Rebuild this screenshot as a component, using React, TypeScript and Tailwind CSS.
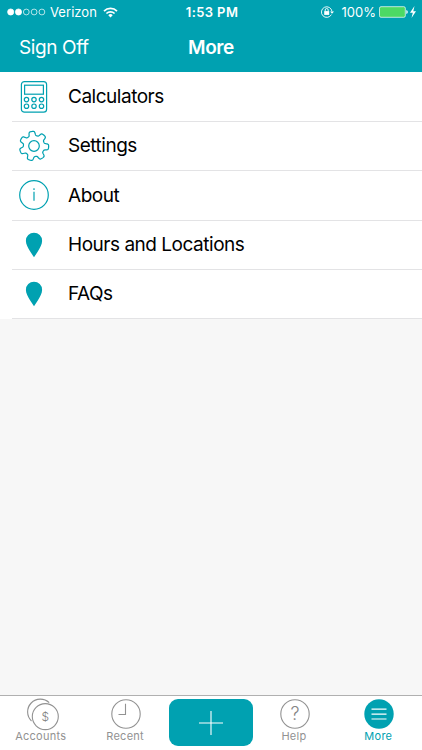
import type { ReactNode } from "react";

const TEAL = "#00a1b1";

const CalculatorIcon = () => (
  <svg width="28" height="34" viewBox="0 0 28 34" fill="none" stroke={TEAL} strokeWidth="1.2">
    <rect x="1.4" y="1.6" width="25.2" height="30.6" rx="3" />
    <rect x="4.6" y="5.2" width="18.8" height="9" />
    {[6.5, 14, 21.5].map((x) => (
      <g key={x}>
        <circle cx={x} cy="19.6" r="2.2" />
        <circle cx={x} cy="26.2" r="2.2" />
      </g>
    ))}
  </svg>
);

// seven rounded teeth, tilted slightly to the left
const gearPath = () => {
  const points: string[] = [];
  for (let i = 0; i < 210; i++) {
    const angle = (i / 210) * Math.PI * 2;
    const wave = Math.tanh(2.4 * (Math.cos(7 * angle + 1.1) + 0.15));
    const r = 12.6 + 2.1 * wave;
    points.push(`${(16 + r * Math.sin(angle)).toFixed(2)} ${(16 - r * Math.cos(angle)).toFixed(2)}`);
  }
  return `M${points.join("L")}Z`;
};

const GearIcon = () => (
  <svg width="32" height="32" viewBox="0 0 32 32" fill="none" stroke={TEAL} strokeWidth="1.2" strokeLinejoin="round">
    <path d={gearPath()} />
    <circle cx="16" cy="16" r="5.3" />
  </svg>
);

const InfoIcon = () => (
  <svg width="32" height="32" viewBox="0 0 32 32" fill="none" stroke={TEAL} strokeWidth="1.2">
    <circle cx="16" cy="16" r="14.3" />
    <path d="M16 12.8V21.8" />
    <path d="M16 9.3V11" />
  </svg>
);

const PinIcon = () => (
  <svg width="18" height="26" viewBox="0 0 18 26" fill={TEAL}>
    <path d="M9 .7a8.1 8.1 0 0 1 8.1 8.2c0 3.2-2 6.8-4.3 10.6L9 25.3l-3.8-5.8C2.9 15.7.9 12.1.9 8.9A8.1 8.1 0 0 1 9 .7Z" />
  </svg>
);

const ROWS: { label: string; icon: ReactNode }[] = [
  { label: "Calculators", icon: <CalculatorIcon /> },
  { label: "Settings", icon: <GearIcon /> },
  { label: "About", icon: <InfoIcon /> },
  { label: "Hours and Locations", icon: <PinIcon /> },
  { label: "FAQs", icon: <PinIcon /> },
];

const AccountsIcon = () => (
  <svg width="34" height="34" viewBox="0 0 34 34" fill="none" stroke="#929292" strokeWidth="1.1">
    <path d="M6.5 23A12.7 12.7 0 1 1 24.2 4.7" />
    <circle cx="20.3" cy="18.6" r="13" />
    <text x="20.3" y="22.9" textAnchor="middle" fontSize="12" fontWeight="300" fill="#808080" stroke="none">$</text>
  </svg>
);

const ClockIcon = () => (
  <svg width="32" height="32" viewBox="0 0 32 32" fill="none" stroke="#929292" strokeWidth="1.1">
    <circle cx="16" cy="16" r="14.2" />
    <path d="M15.5 5.8V16.5H8.5" />
  </svg>
);

const HelpIcon = () => (
  <svg width="32" height="32" viewBox="0 0 32 32" fill="none" stroke="#929292" strokeWidth="1.1">
    <circle cx="16" cy="16" r="14.2" />
    <text x="16" y="22" textAnchor="middle" fontSize="18" fontWeight="300" fill="#858585" stroke="none">?</text>
  </svg>
);

const MoreIcon = () => (
  <svg width="32" height="32" viewBox="0 0 32 32">
    <circle cx="16" cy="16" r="14.7" fill={TEAL} />
    <path d="M8.5 11.2h15M8.5 16.1h15M8.5 21h15" stroke="white" strokeWidth="1.2" />
  </svg>
);

const Tab = ({ label, icon, active }: { label: string; icon: ReactNode; active?: boolean }) => (
  <div className={`flex flex-col items-center pt-[2px] ${active ? "text-[#00a1b1]" : "text-[#929292]"}`}>
    <div className="h-8 mr-px">{icon}</div>
    <span className="mr-[3px] text-[11px] leading-[13px] tracking-[0.25px]">{label}</span>
  </div>
);

const StatusBar = () => (
  <div className="h-6 flex items-center text-[13px] leading-none">
    <div className="flex-1 flex items-center pl-[7px]">
      <svg width="39" height="8" viewBox="0 0 39 8" fill="none" stroke="white" strokeWidth="0.7">
        <circle cx="3.7" cy="4" r="3.1" fill="white" />
        <circle cx="11.5" cy="4" r="3.1" fill="white" />
        <circle cx="19.3" cy="4" r="2.9" />
        <circle cx="27.1" cy="4" r="2.9" />
        <circle cx="34.9" cy="4" r="2.9" />
      </svg>
      <span className="ml-1 tracking-[0.05px]">Verizon</span>
      <svg className="ml-[6px]" width="15" height="11" viewBox="0 0 15 11" fill="none" stroke="white" strokeWidth="1.7">
        <path d="M1 4.1a9.2 9.2 0 0 1 13 0" />
        <path d="M3.4 6.5a5.8 5.8 0 0 1 8.2 0" />
        <path d="M7.5 10.5 5.3 8.2a3.1 3.1 0 0 1 4.4 0Z" fill="white" stroke="none" />
      </svg>
    </div>
    <span className="font-semibold tracking-[0.4px]">1:53 PM</span>
    <div className="flex-1 flex items-center justify-end pr-[5px]">
      <svg width="15" height="14" viewBox="0 0 15 14" fill="none" stroke="white" strokeWidth="0.9">
        <path d="M11.4 9.6A5.3 5.3 0 1 1 12 6.5" />
        <path d="M10.1 6.4h3.9L12 8.7Z" fill="white" stroke="none" />
        <rect x="4.2" y="6.1" width="5" height="3.8" fill="white" stroke="none" />
        <path d="M5.2 6.2V5a1.5 1.5 0 0 1 3 0v1.2" />
      </svg>
      <span className="ml-[7px]">100%</span>
      <svg className="ml-[3px]" width="38" height="12" viewBox="0 0 38 12">
        <rect x="0.5" y="0.7" width="25.8" height="10.6" rx="1.5" fill="#4cd964" stroke="white" strokeWidth="0.7" />
        <path d="M27.3 4q1.5.3 1.5 2t-1.5 2Z" fill="white" />
        <path d="M35.5 0 31 6.7h2.8L32.5 12 37 5.2h-2.7Z" fill="white" />
      </svg>
    </div>
  </div>
);

export default function App() {
  return (
    <div className="w-[422px] h-[750px] overflow-hidden flex flex-col bg-[#f7f7f7] font-['Inter','Liberation_Sans',sans-serif]">
      <header className="h-[72px] shrink-0 bg-[#00a1b1] text-white">
        <StatusBar />
        <div className="h-12 grid grid-cols-3 items-center">
          <span className="pl-[19px] text-[19px] tracking-[-0.4px]">Sign Off</span>
          <h1 className="text-center text-[19px] font-semibold tracking-[-0.4px]">More</h1>
        </div>
      </header>

      <ul className="bg-white pt-[0.4px]">
        {ROWS.map(({ label, icon }) => (
          <li key={label} className="h-[49.4px] pl-3 flex">
            <div className="flex-1 flex items-center border-b border-[#e3e3e5]">
              <div className="w-11 flex justify-center">{icon}</div>
              <span className="mt-px ml-3 text-[19px] text-black tracking-[-0.48px]">{label}</span>
            </div>
          </li>
        ))}
      </ul>

      <nav className="mt-auto h-[55px] shrink-0 grid grid-cols-5 bg-white border-t border-[#b0b0b0]">
        <Tab label="Accounts" icon={<AccountsIcon />} />
        <Tab label="Recent" icon={<ClockIcon />} />
        <button className="mt-[3px] w-[84px] h-[47px] rounded-[9px] bg-[#00a1b1] flex items-center justify-center justify-self-center">
          <svg width="24" height="24" viewBox="0 0 24 24" stroke="white" strokeWidth="1.1">
            <path d="M12 0V24M0 12H24" />
          </svg>
        </button>
        <Tab label="Help" icon={<HelpIcon />} />
        <Tab label="More" icon={<MoreIcon />} active />
      </nav>
    </div>
  );
}
